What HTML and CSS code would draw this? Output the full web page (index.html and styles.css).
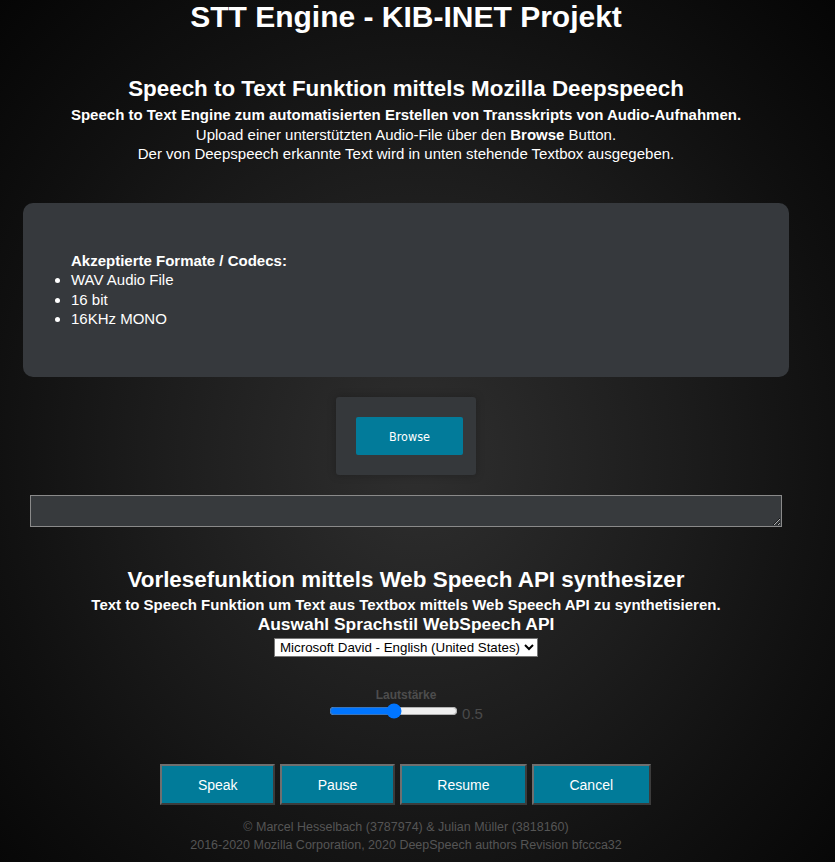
FILE: index.html
```html
<!DOCTYPE html>
<html lang="de">
<head>
<meta charset="utf-8">
<title>STT Engine - KIB-INET Projekt</title>
<link rel="stylesheet" href="styles.css">
</head>
<body>
<div class="page">
  <h1 class="title">STT Engine - KIB-INET Projekt</h1>

  <h2 class="heading heading-stt">Speech to Text Funktion mittels Mozilla Deepspeech</h2>
  <div class="intro">
    <div class="intro-bold">Speech to Text Engine zum automatisierten Erstellen von Transskripts von Audio-Aufnahmen.</div>
    <div>Upload einer unterstützten Audio-File über den <b>Browse</b> Button.</div>
    <div>Der von Deepspeech erkannte Text wird in unten stehende Textbox ausgegeben.</div>
  </div>

  <div class="card">
    <div class="card-title">Akzeptierte Formate / Codecs:</div>
    <ul class="formats">
      <li>WAV Audio File</li>
      <li>16 bit</li>
      <li>16KHz MONO</li>
    </ul>
  </div>

  <div class="upload-wrap">
    <div class="upload-box">
      <button class="browse-btn" type="button">Browse</button>
    </div>
  </div>

  <div class="text-wrap">
    <textarea class="result"></textarea>
  </div>

  <h2 class="heading heading-tts">Vorlesefunktion mittels Web Speech API synthesizer</h2>
  <div class="intro-bold tts-sub">Text to Speech Funktion um Text aus Textbox mittels Web Speech API zu synthetisieren.</div>
  <div class="voice-title">Auswahl Sprachstil WebSpeech API</div>
  <div class="voice-row">
    <select class="voice-select">
      <option>Microsoft David - English (United States)</option>
    </select>
  </div>

  <div class="volume-label">Lautstärke</div>
  <div class="volume-row">
    <input class="volume" type="range" min="0" max="1" step="0.1" value="0.5">
    <span class="volume-value">0.5</span>
  </div>

  <div class="controls">
    <button class="ctrl-btn" type="button">Speak</button>
    <button class="ctrl-btn" type="button">Pause</button>
    <button class="ctrl-btn" type="button">Resume</button>
    <button class="ctrl-btn" type="button">Cancel</button>
  </div>

  <footer class="footer">
    <div>© Marcel Hesselbach (3787974) &amp; Julian Müller (3818160)</div>
    <div>2016-2020 Mozilla Corporation, 2020 DeepSpeech authors Revision bfccca32</div>
  </footer>
</div>
</body>
</html>
```

FILE: styles.css
```css
html, body {
  margin: 0;
  padding: 0;
  height: 100%;
}

body {
  background: radial-gradient(ellipse farthest-corner at 50% 53%, #2f2f2f 0%, #1c1c1c 45%, #101010 72%, #050505 100%);
  color: #ffffff;
  font-family: "Liberation Sans", Arial, sans-serif;
  overflow: hidden;
}

.page {
  width: 812px;
  text-align: center;
}

.title {
  margin: 0;
  font-size: 30px;
  line-height: 34px;
  font-weight: bold;
}

.heading {
  margin: 0;
  font-size: 22.4px;
  line-height: 26px;
  font-weight: bold;
}

.heading-stt {
  margin-top: 42px;
}

.intro {
  margin-top: 3px;
  font-size: 15px;
  line-height: 19.5px;
}

.intro-bold {
  font-weight: bold;
  font-size: 15px;
  line-height: 19.5px;
}

.card {
  margin: 39px 23px 0;
  padding: 48px 0 48px 48px;
  background: #36393d;
  border-radius: 10px;
  text-align: left;
  font-size: 15px;
  line-height: 19.5px;
}

.card-title {
  font-weight: bold;
}

.formats {
  margin: 0;
  padding: 0;
}

.upload-wrap {
  margin-top: 20px;
  display: flex;
  justify-content: center;
}

.upload-box {
  padding: 20px 13px 20px 20px;
  background: #35383b;
  border-radius: 3px;
  box-shadow: 0 0 8px rgba(0, 0, 0, 0.25);
}

.browse-btn {
  display: block;
  width: 107px;
  height: 38px;
  border: none;
  border-radius: 2px;
  background: #027b9a;
  color: #ffffff;
  font-family: "DejaVu Sans", sans-serif;
  font-stretch: condensed;
  font-size: 12.5px;
  padding: 2px 0 0;
}

.text-wrap {
  margin-top: 20px;
  display: flex;
  justify-content: center;
}

.result {
  display: block;
  box-sizing: border-box;
  width: 752px;
  height: 32px;
  margin: 0;
  background: #373a3d;
  border: 1px solid #8a8a8a;
  color: #ffffff;
  resize: vertical;
}

.heading-tts {
  margin-top: 40px;
}

.tts-sub {
  margin-top: 2px;
}

.voice-title {
  font-size: 17.4px;
  line-height: 20px;
  font-weight: bold;
}

.voice-row {
  margin-top: 4px;
  display: flex;
  justify-content: center;
}

.voice-select {
  font-family: "Liberation Sans", Arial, sans-serif;
  font-size: 13.333px;
  height: 19px;
  width: 264px;
  padding: 0 0 0 1px;
  background: #ffffff;
  color: #000000;
  border: 1px solid #767676;
  border-radius: 0;
}

.volume-label {
  margin-top: 31px;
  font-size: 12px;
  line-height: 14px;
  font-weight: bold;
  color: #4d4d4d;
}

.volume-row {
  display: flex;
  justify-content: center;
  align-items: center;
  height: 18px;
  padding-left: 0;
}

.volume {
  width: 129px;
  height: 16px;
  margin: 0 4px 0 0;
}

.volume-value {
  font-size: 15px;
  line-height: 17px;
  color: #4a4a4a;
  padding-top: 5px;
}

.controls {
  margin-top: 44px;
  display: flex;
  justify-content: center;
  gap: 5px;
  padding-right: 1px;
}

.ctrl-btn {
  box-sizing: border-box;
  height: 41px;
  padding: 0 35.5px;
  background: #017b99;
  color: #ffffff;
  font-family: "Liberation Sans", Arial, sans-serif;
  font-size: 14px;
  border-style: solid;
  border-width: 2px;
  border-color: #6f6f6f #3c3c3c #3c3c3c #6f6f6f;
}

.footer {
  margin-top: 13px;
  font-size: 12.5px;
  line-height: 18.3px;
  color: #555555;
}
```
